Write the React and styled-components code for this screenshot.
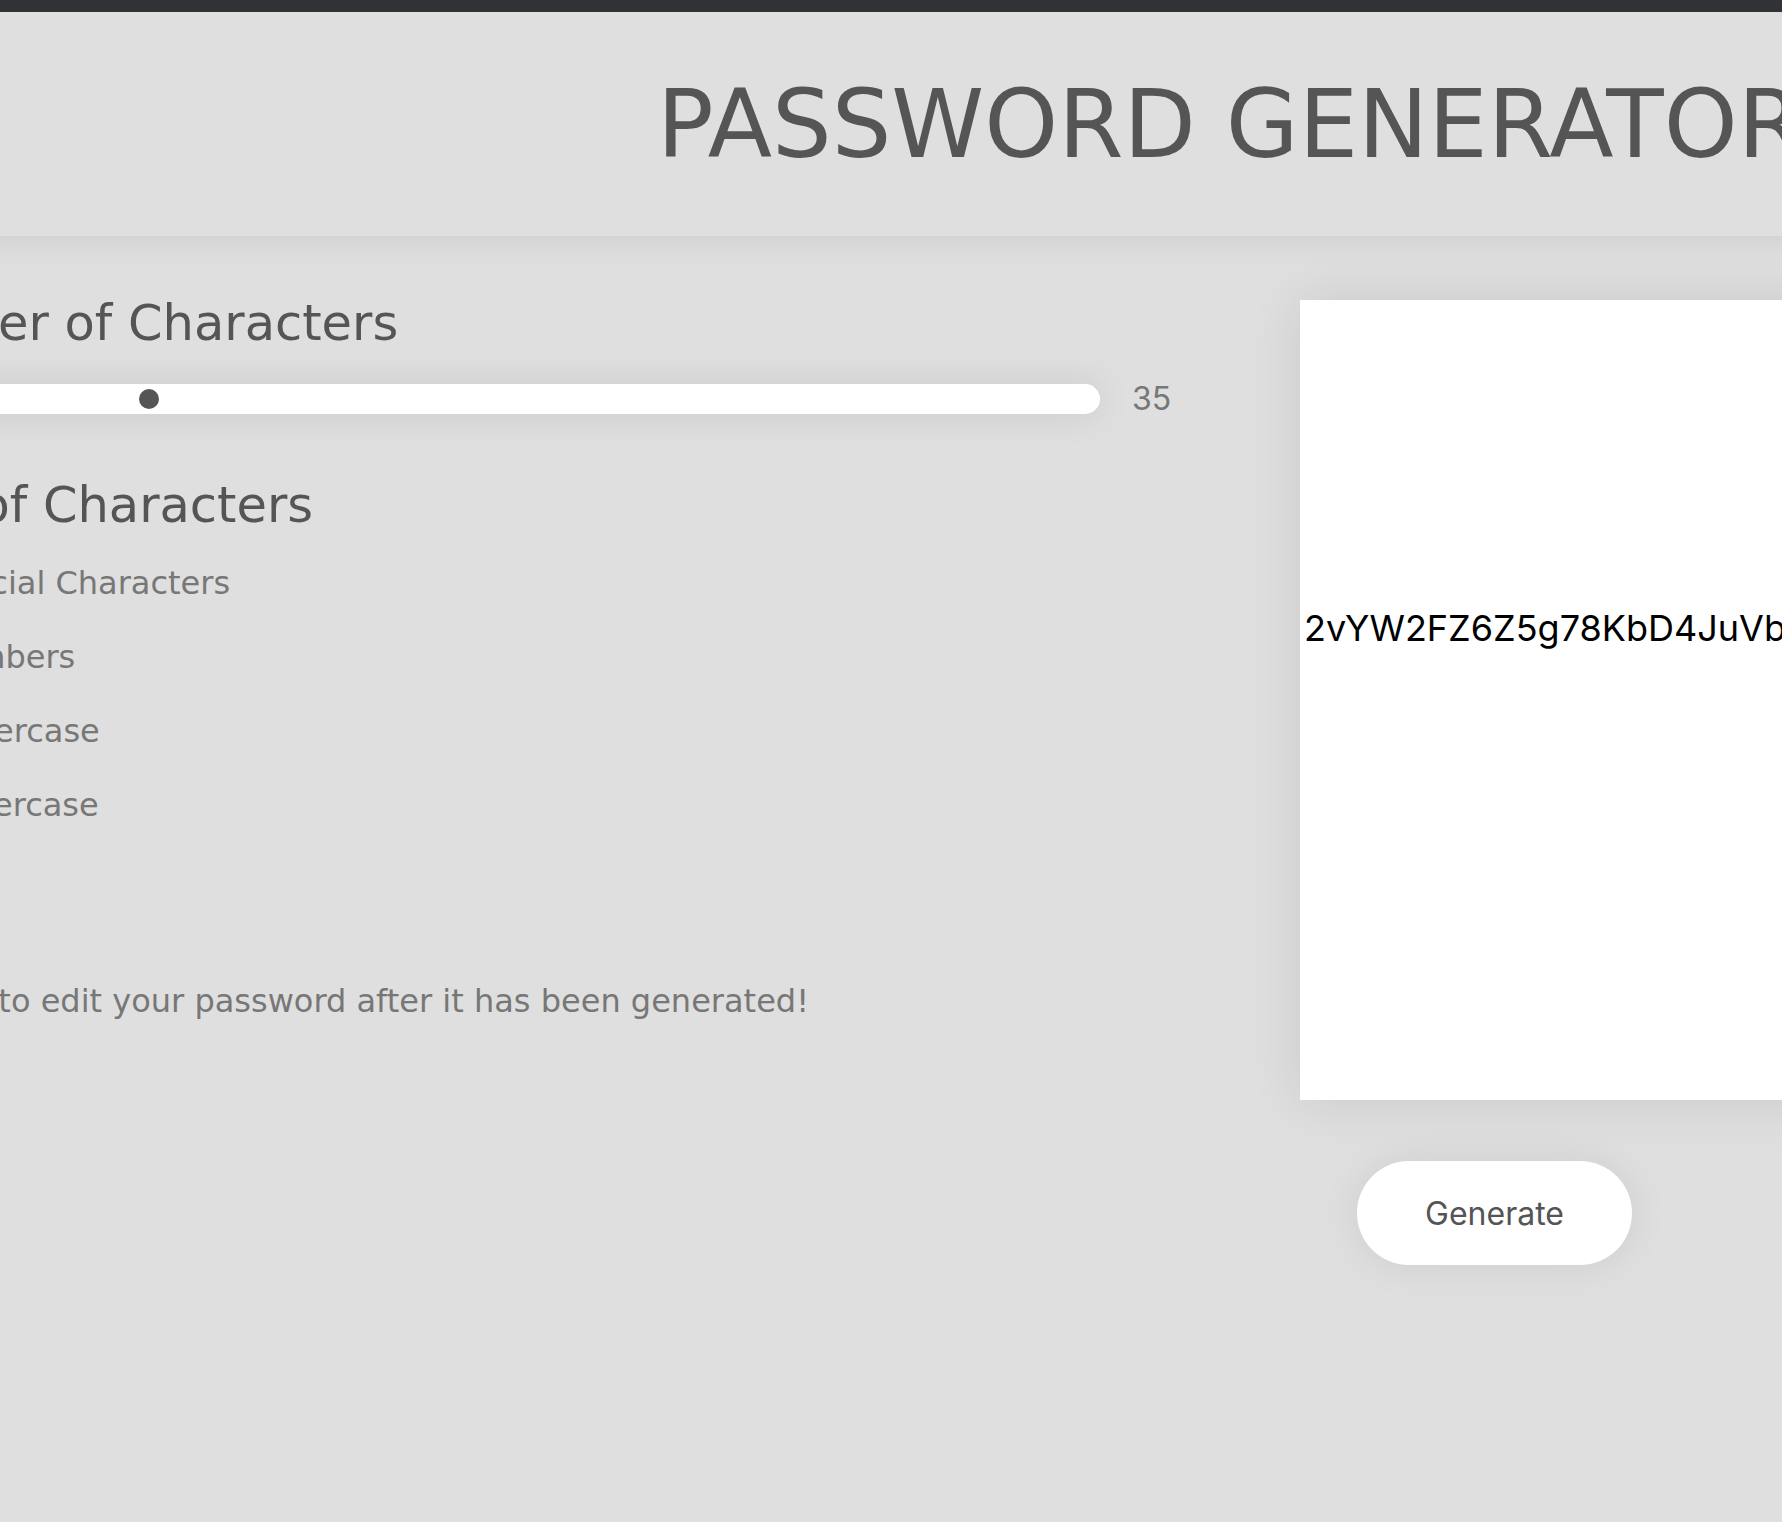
import React, { useState } from "react";
import styled, { createGlobalStyle } from "styled-components";

const GlobalStyle = createGlobalStyle`
  html, body {
    margin: 0;
    padding: 0;
    height: 100%;
    background: #dfdfdf;
  }
  body {
    font-family: "DejaVu Sans", "Noto Sans", sans-serif;
    overflow: hidden;
  }
  * { box-sizing: border-box; }
`;

const Root = styled.div`
  width: 100vw;
  min-height: 100vh;
  overflow: hidden;
  background: #dfdfdf;
`;

const TopBar = styled.div`
  height: 12px;
  background: #333438;
`;

const Page = styled.div`
  width: 2860px;
  margin-left: -200px;
`;

const Header = styled.header`
  position: relative;
  z-index: 1;
  height: 224px;
  display: flex;
  align-items: center;
  justify-content: center;
  background: #dfdfdf;
  box-shadow: 0 4px 28px rgba(0, 0, 0, 0.08);
`;

const Title = styled.h1`
  margin: 0;
  font-family: "DejaVu Sans", sans-serif;
  font-weight: 400;
  font-size: 94px;
  line-height: normal;
  color: #555555;
  white-space: nowrap;
`;

const Main = styled.main`
  display: flex;
  align-items: flex-start;
  gap: 70px;
  padding: 64px 0 0 50px;
`;

const Settings = styled.section`
  flex: 0 0 1380px;
  display: flex;
  flex-direction: column;
`;

const SectionTitle = styled.h2`
  margin: ${(p) => p.$top || 0}px 0 0;
  font-family: "DejaVu Sans", sans-serif;
  font-weight: 400;
  font-size: 49.5px;
  line-height: 46px;
  color: #555555;
  white-space: nowrap;
`;

const SliderRow = styled.div`
  display: flex;
  align-items: center;
  gap: 32px;
  margin-top: 38px;
  height: 30px;
`;

const Range = styled.input.attrs({ type: "range" })`
  -webkit-appearance: none;
  appearance: none;
  width: 1250px;
  height: 30px;
  margin: 0;
  padding: 0;
  background: #ffffff;
  border-radius: 15px;
  box-shadow: 0 0 36px rgba(0, 0, 0, 0.1);
  outline: none;
  cursor: pointer;

  &::-webkit-slider-thumb {
    -webkit-appearance: none;
    appearance: none;
    width: 20px;
    height: 20px;
    border-radius: 50%;
    background: #555555;
    border: none;
  }
  &::-moz-range-thumb {
    width: 20px;
    height: 20px;
    border-radius: 50%;
    background: #555555;
    border: none;
  }
`;

const RangeValue = styled.span`
  font-family: Inter, "Liberation Sans", sans-serif;
  font-size: 32px;
  line-height: 30px;
  color: #777777;
`;

const OptionList = styled.ul`
  list-style: none;
  margin: 18px 0 0;
  padding: 0;
`;

const OptionRow = styled.li`
  display: flex;
  align-items: center;
  height: 74px;
`;

const Checkbox = styled.input.attrs({ type: "checkbox" })`
  width: 24px;
  height: 24px;
  margin: 0 56px 0 0;
  accent-color: #555555;
`;

const OptionLabel = styled.label`
  font-family: "DejaVu Sans", sans-serif;
  font-size: 32px;
  line-height: 74px;
  color: #777777;
  white-space: nowrap;
`;

const Note = styled.p`
  margin: 140px 0 0;
  font-family: "DejaVu Sans", sans-serif;
  font-size: 32px;
  line-height: 38px;
  color: #777777;
  white-space: nowrap;
`;

const Output = styled.section`
  display: flex;
  flex-direction: column;
  align-items: flex-start;
`;

const PasswordBox = styled.div`
  width: 640px;
  height: 800px;
  padding: 307px 4px 0;
  background: #ffffff;
  box-shadow: 0 0 50px rgba(0, 0, 0, 0.1);
  overflow: hidden;
`;

const PasswordText = styled.div`
  font-family: Inter, "Liberation Sans", sans-serif;
  font-size: 36px;
  line-height: 1.2;
  color: #000000;
  white-space: nowrap;
`;

const GenerateButton = styled.button`
  margin: 61px 0 0 57px;
  width: 275px;
  height: 104px;
  border: none;
  border-radius: 52px;
  background: #ffffff;
  box-shadow: 0 0 40px rgba(0, 0, 0, 0.08);
  font-family: Inter, "Liberation Sans", sans-serif;
  font-size: 32px;
  color: #555555;
  cursor: pointer;
`;

const options = ["Special Characters", "Numbers", "Uppercase", "Lowercase"];

export default function App() {
  const [length, setLength] = useState(35);
  const [checked, setChecked] = useState({
    "Special Characters": true,
    Numbers: true,
    Uppercase: true,
    Lowercase: true,
  });

  return (
    <Root>
      <GlobalStyle />
      <TopBar />
      <Page>
        <Header>
          <Title>PASSWORD GENERATOR</Title>
        </Header>
        <Main>
          <Settings>
            <SectionTitle>Number of Characters</SectionTitle>
            <SliderRow>
              <Range
                min={8}
                max={123}
                value={length}
                onChange={(e) => setLength(Number(e.target.value))}
              />
              <RangeValue>{length}</RangeValue>
            </SliderRow>
            <SectionTitle $top={68}>Type of Characters</SectionTitle>
            <OptionList>
              {options.map((name) => (
                <OptionRow key={name}>
                  <Checkbox
                    id={name}
                    checked={checked[name]}
                    onChange={() =>
                      setChecked((c) => ({ ...c, [name]: !c[name] }))
                    }
                  />
                  <OptionLabel htmlFor={name}>{name}</OptionLabel>
                </OptionRow>
              ))}
            </OptionList>
            <Note>Feel free to edit your password after it has been generated!</Note>
          </Settings>
          <Output>
            <PasswordBox>
              <PasswordText>2vYW2FZ6Z5g78KbD4JuVbX9qLm3T8pRs1eN</PasswordText>
            </PasswordBox>
            <GenerateButton>Generate</GenerateButton>
          </Output>
        </Main>
      </Page>
    </Root>
  );
}
